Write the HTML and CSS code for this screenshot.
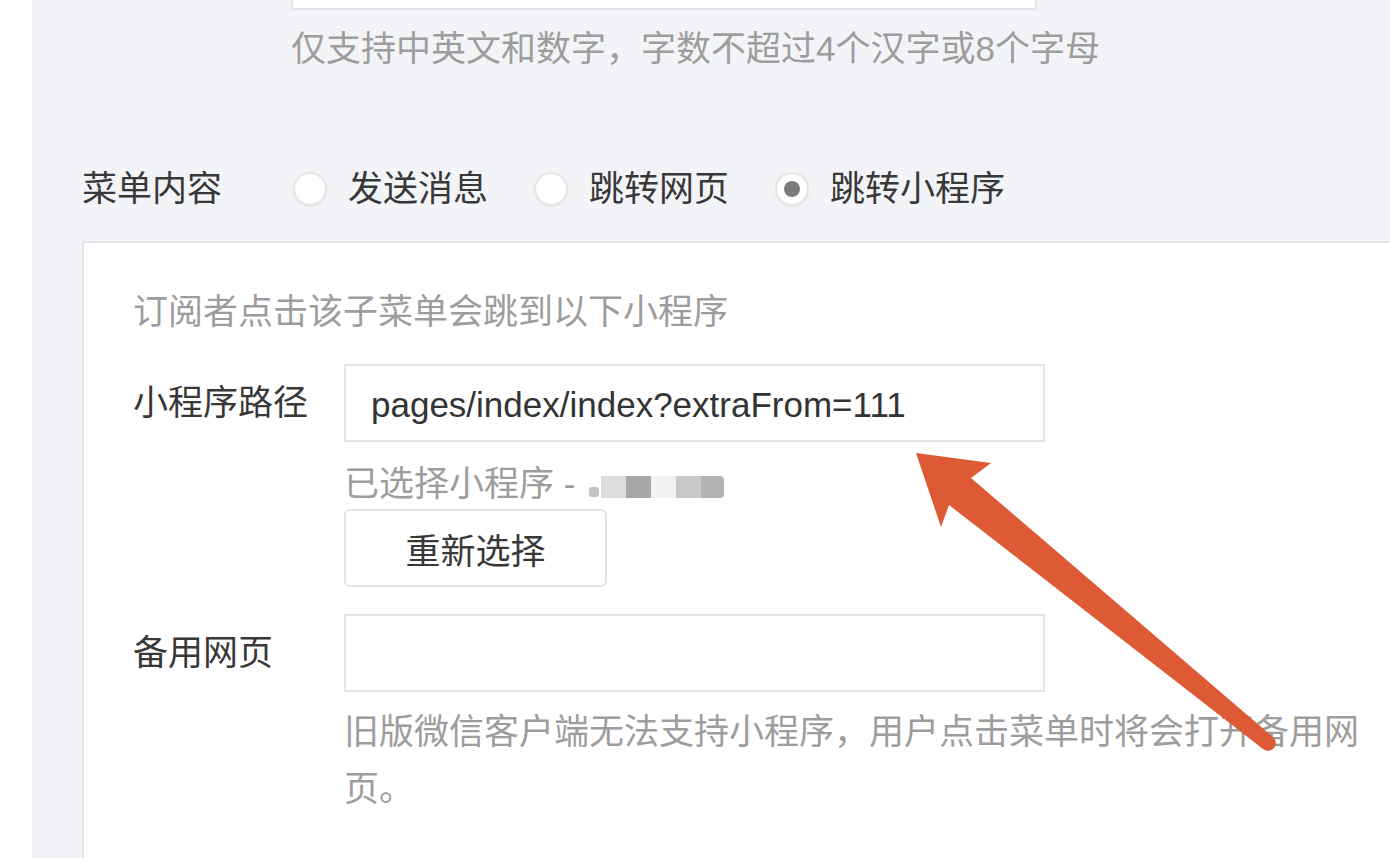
FILE: index.html
```html
<!DOCTYPE html>
<html lang="zh-CN">
<head>
<meta charset="utf-8">
<link rel="stylesheet" href="styles.css">
</head>
<body>
<div class="page">
  <div class="strip"></div>
  <main class="main">
    <div class="name-field">
      <div class="input top-input"></div>
      <p class="hint">仅支持中英文和数字，字数不超过4个汉字或8个字母</p>
    </div>

    <div class="menu-row">
      <span class="menu-label">菜单内容</span>
      <label class="radio"><span class="dot"></span>发送消息</label>
      <label class="radio"><span class="dot"></span>跳转网页</label>
      <label class="radio checked"><span class="dot"></span>跳转小程序</label>
    </div>

    <section class="card">
      <p class="desc">订阅者点击该子菜单会跳到以下小程序</p>

      <div class="field">
        <span class="field-label">小程序路径</span>
        <div class="field-body">
          <div class="input path-input">pages/index/index?extraFrom=111</div>
          <p class="hint selected">已选择小程序 - <span class="mosaic"><i class="m0"></i><i class="m1"></i><i class="m2"></i><i class="m3"></i><i class="m4"></i><i class="m5"></i></span></p>
          <button class="btn">重新选择</button>
        </div>
      </div>

      <div class="field second">
        <span class="field-label">备用网页</span>
        <div class="field-body">
          <div class="input path-input"></div>
          <p class="hint backup">旧版微信客户端无法支持小程序，用户点击菜单时将会打开备用网页。</p>
        </div>
      </div>
    </section>
  </main>
</div>

<svg class="arrow" width="1390" height="858" viewBox="0 0 1390 858">
  <path d="M916 453 L991 463 L971 478 L1273 737 A7 7 0 0 1 1263 749 L949 505 L941 527 Z" fill="#dd5a35"/>
</svg>
</body>
</html>
```

FILE: styles.css
```css
* { box-sizing: border-box; }

html, body {
  margin: 0;
  padding: 0;
  height: 858px;
  overflow: hidden;
  background: #ffffff;
  font-family: "Liberation Sans", "Noto Sans CJK SC", sans-serif;
  font-size: 35px;
  color: #383838;
}

.page {
  display: flex;
  height: 858px;
}

.strip {
  width: 32px;
  flex: none;
  background: #ffffff;
}

.main {
  flex: 1;
  background: #f3f4f8;
  padding-left: 50px;
  overflow: hidden;
}

.name-field {
  margin-left: 209px;
}

.input {
  background: #ffffff;
  border: 2px solid #e4e5ea;
}

.top-input {
  width: 746px;
  height: 80px;
  margin-top: -70px;
}

.hint {
  margin: 0;
  color: #9d9d9d;
  line-height: 50px;
}

.name-field .hint {
  margin-top: 14px;
}

.menu-row {
  display: flex;
  align-items: center;
  margin-top: 90px;
  height: 50px;
  line-height: 50px;
}

.menu-label {
  width: 211px;
  flex: none;
}

.radio {
  display: flex;
  align-items: center;
  margin-right: 46px;
}

.dot {
  width: 34px;
  height: 34px;
  border-radius: 50%;
  background: #ffffff;
  border: 2px solid #e6e6e6;
  box-shadow: 0 1px 2px rgba(0, 0, 0, 0.06);
  margin-right: 21px;
  display: flex;
  align-items: center;
  justify-content: center;
}

.radio.checked .dot::after {
  content: "";
  width: 16px;
  height: 16px;
  border-radius: 50%;
  background: #7b7b7b;
}

.card {
  margin-top: 27px;
  background: #ffffff;
  border-top: 2px solid #e4e5ea;
  border-left: 2px solid #e4e5ea;
  padding: 44px 0 0 49px;
  height: 700px;
}

.desc {
  margin: 0;
  color: #9d9d9d;
  line-height: 50px;
}

.field {
  display: flex;
  align-items: flex-start;
  margin-top: 27px;
}

.field-label {
  width: 211px;
  flex: none;
  line-height: 78px;
}

.field-body {
  display: flex;
  flex-direction: column;
  align-items: flex-start;
}

.path-input {
  width: 701px;
  height: 78px;
  padding-left: 25px;
  line-height: 78px;
  color: #333333;
}

.hint.selected {
  margin-top: 17px;
  display: flex;
  align-items: center;
}

.mosaic {
  display: flex;
  align-items: center;
  margin-left: 14px;
  margin-top: 6px;
  height: 24px;
}

.mosaic i {
  display: block;
  height: 22px;
}

.mosaic .m0 { width: 10px; height: 10px; margin-top: 10px; background: #c4c4c4; border-radius: 3px; margin-right: 2px; }
.mosaic .m1 { width: 25px; background: #dcdcdc; }
.mosaic .m2 { width: 25px; background: #a8a8a8; }
.mosaic .m3 { width: 25px; background: #f2f2f2; }
.mosaic .m4 { width: 25px; background: #c9c9c9; }
.mosaic .m5 { width: 23px; background: #b3b3b3; border-radius: 0 4px 4px 0; }

.btn {
  width: 263px;
  height: 78px;
  background: #ffffff;
  border: 2px solid #e2e3e6;
  border-radius: 6px;
  font: inherit;
  color: #383838;
  padding: 0;
}

.field.second {
  margin-top: 27px;
}

.hint.backup {
  margin-top: 11px;
  width: 1030px;
  line-height: 57px;
}

.arrow {
  position: absolute;
  left: 0;
  top: 0;
  pointer-events: none;
}
```
